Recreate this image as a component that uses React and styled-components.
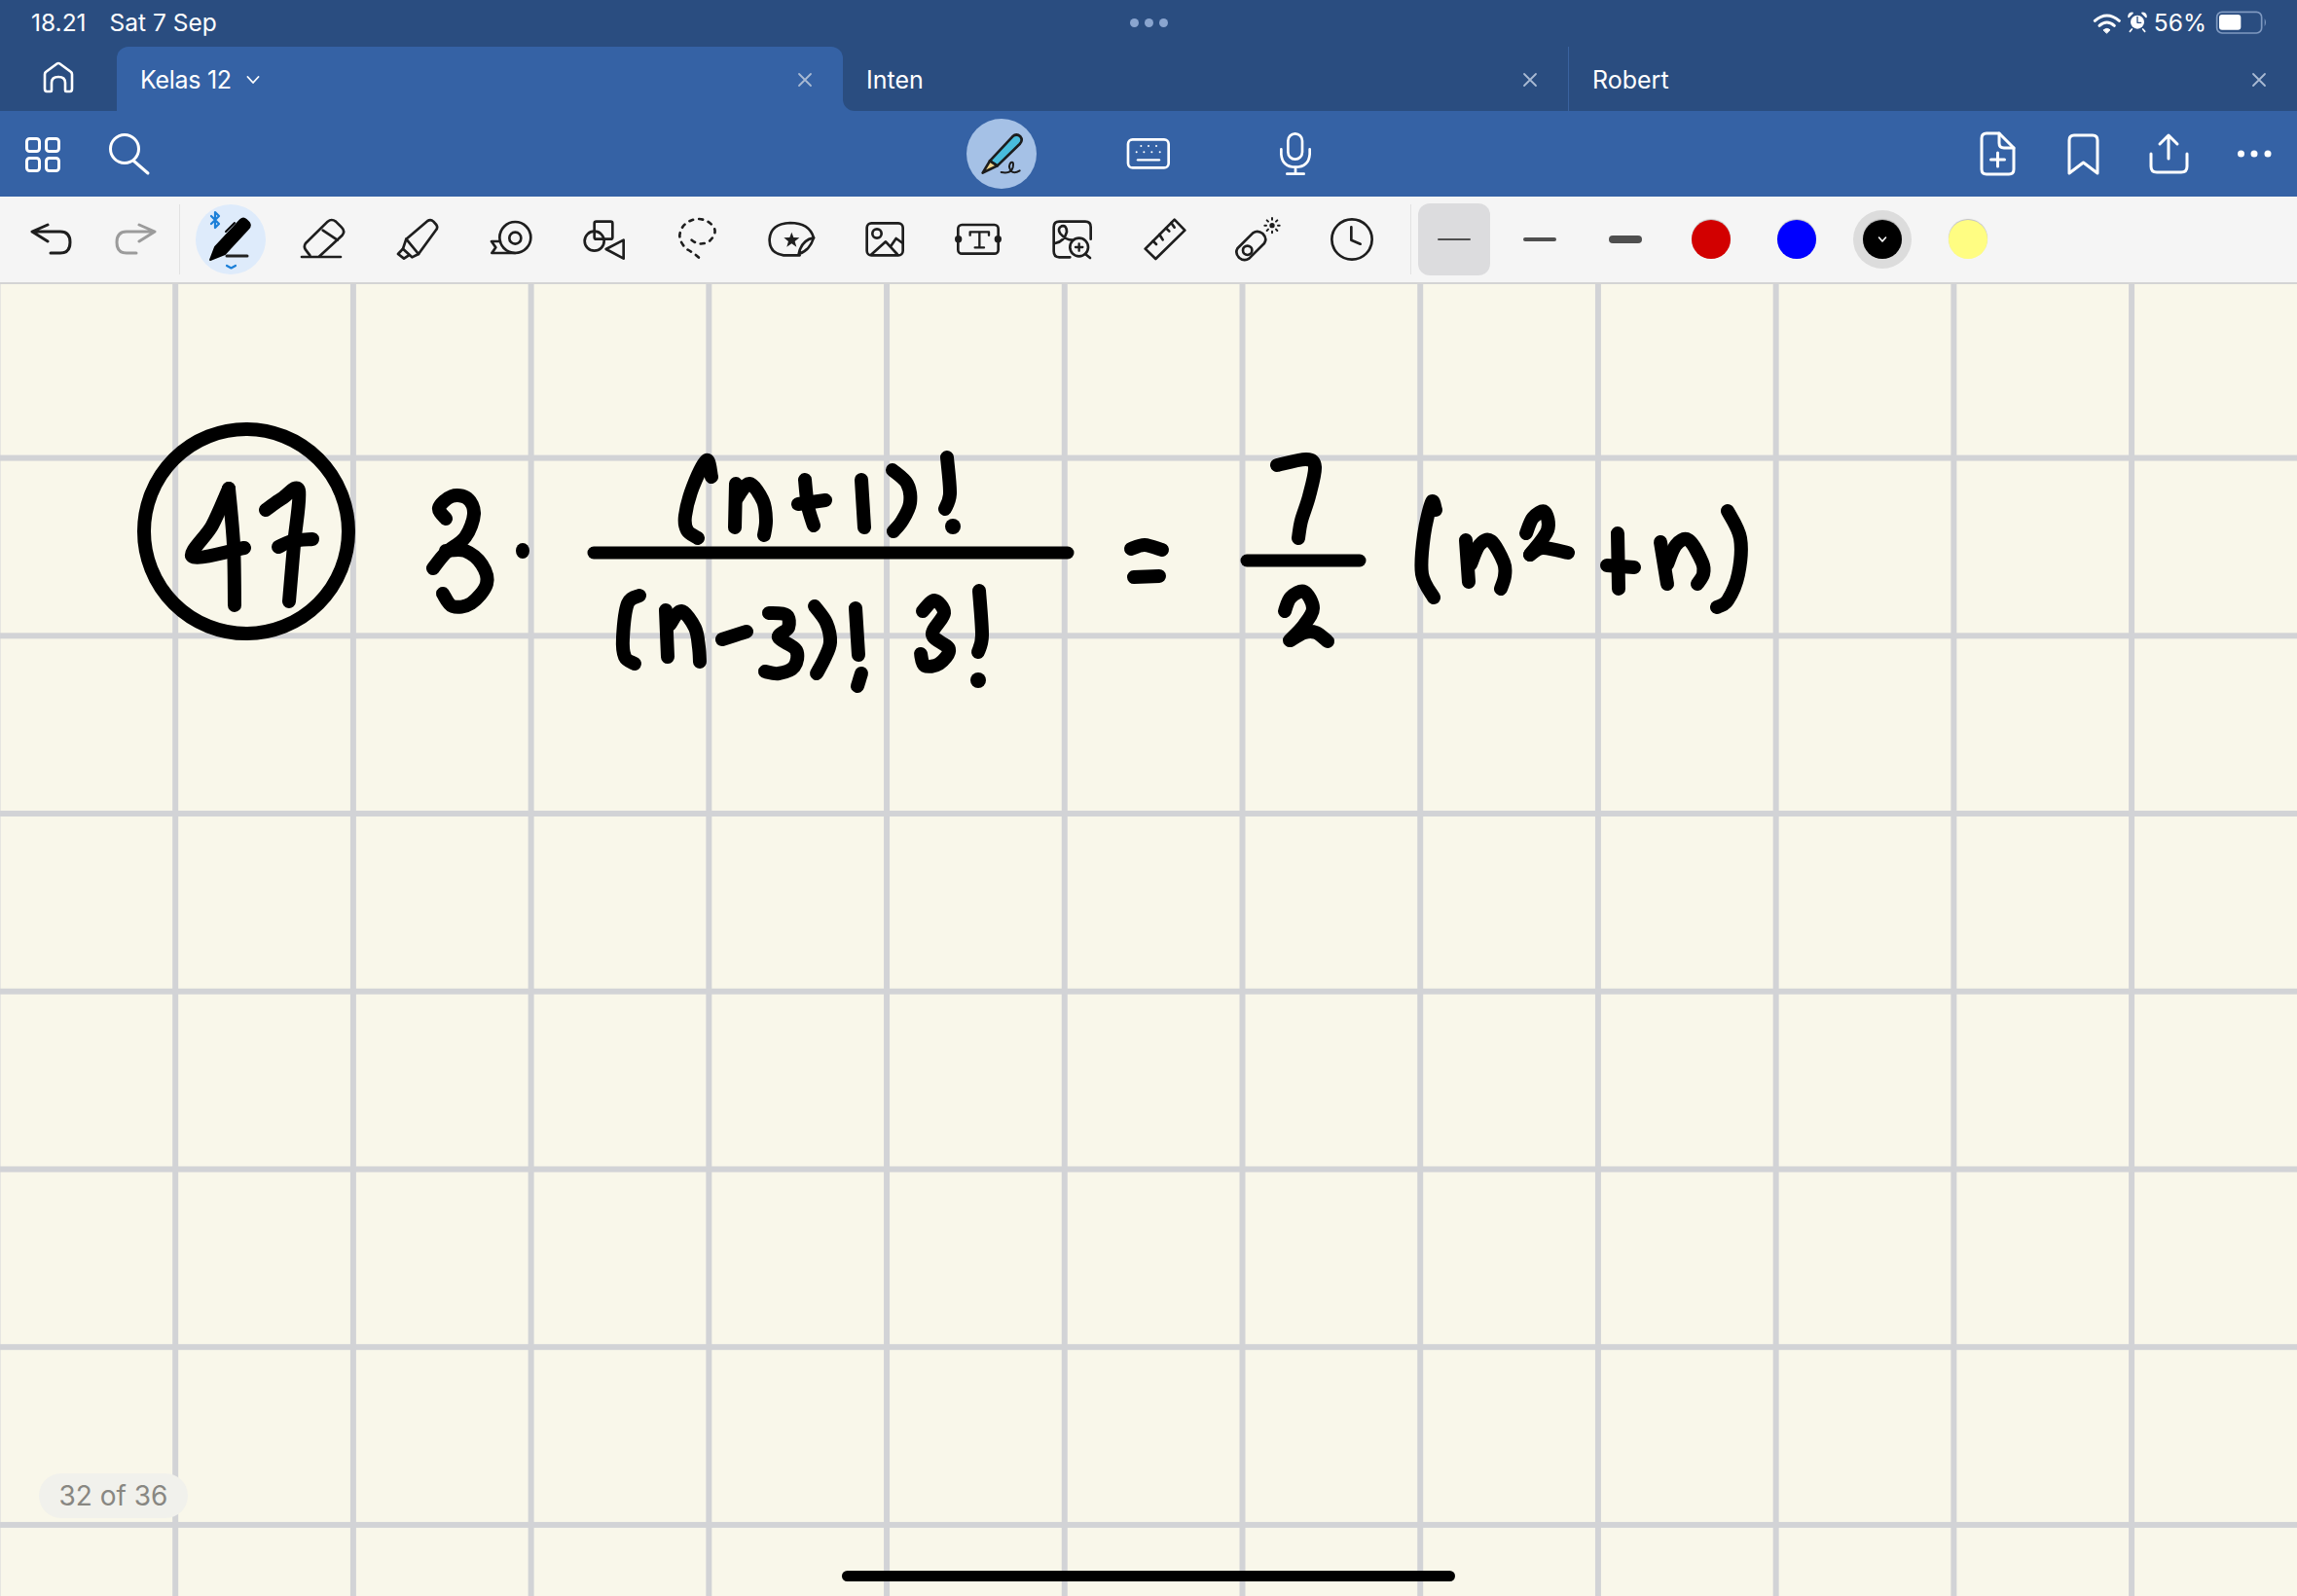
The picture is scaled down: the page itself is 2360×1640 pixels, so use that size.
import React from "react";
import styled, { createGlobalStyle } from "styled-components";

const Global = createGlobalStyle`
  html, body { margin: 0; padding: 0; background: #f9f7ea; overflow: hidden; }
  * { box-sizing: border-box; }
`;

const Page = styled.div`
  width: 2360px;
  height: 1640px;
  display: flex;
  flex-direction: column;
  font-family: Inter, "Liberation Sans", sans-serif;
  overflow: hidden;
`;

/* ---------- status bar ---------- */
const StatusBar = styled.div`
  height: 48px;
  background: #2a4d80;
  color: #fff;
  display: grid;
  grid-template-columns: 1fr auto 1fr;
  align-items: center;
  padding: 0 30px 2px;
  font-size: 24.5px;
`;
const StatusLeft = styled.div`
  display: flex;
  gap: 24px;
  margin-left: 2px;
`;
const StatusDots = styled.div`
  display: flex;
  gap: 6px;
`;
const StatusDot = styled.span`
  width: 9px;
  height: 9px;
  border-radius: 50%;
  background: #8aa5cf;
`;
const StatusRight = styled.div`
  display: flex;
  align-items: center;
  justify-content: flex-end;
`;
const Percent = styled.span`
  margin: 0 9px 0 6px;
`;

/* ---------- tabs ---------- */
const TabBar = styled.div`
  height: 66px;
  background: #2a4d80;
  display: flex;
`;
const HomeSlot = styled.div`
  width: 120px;
  display: flex;
  align-items: center;
  justify-content: center;
`;
const Tab = styled.div`
  flex: ${(p) => (p.$last ? "1" : `0 0 ${p.$w}px`)};
  position: relative;
  display: flex;
  align-items: center;
  justify-content: space-between;
  padding: 2px 31px 0 24px;
  color: #fff;
  font-size: 25px;
  background: ${(p) => (p.$active ? "#3562a5" : "#2a4d80")};
  border-radius: ${(p) => (p.$active ? "12px 12px 0 0" : p.$first ? "0 0 0 12px" : "0")};
  border-left: ${(p) => (p.$last ? "1px solid #3a639f" : "none")};
  z-index: ${(p) => (p.$active ? 0 : 1)};
  &::after {
    content: ${(p) => (p.$active ? '""' : "none")};
    position: absolute;
    left: 100%;
    bottom: 0;
    width: 14px;
    height: 14px;
    background: #3562a5;
  }
`;
const TabLabel = styled.span`
  display: flex;
  align-items: center;
  gap: 15px;
  letter-spacing: -0.3px;
`;

/* ---------- blue toolbar ---------- */
const MainBar = styled.div`
  height: 88px;
  background: #3562a5;
  display: grid;
  grid-template-columns: 1fr auto 1fr;
  align-items: center;
`;
const MainGroup = styled.div`
  display: flex;
  justify-content: ${(p) => (p.$end ? "flex-end" : "flex-start")};
`;
const MainSlot = styled.div`
  width: ${(p) => p.$w || 88}px;
  height: 88px;
  display: flex;
  align-items: center;
  justify-content: center;
`;
const PenDisc = styled.div`
  width: 72px;
  height: 72px;
  border-radius: 50%;
  background: #a5c1e6;
  display: flex;
`;

/* ---------- drawing tools ---------- */
const ToolRow = styled.div`
  height: 90px;
  background: #f5f5f5;
  border-bottom: 2px solid #d4d4d4;
  display: flex;
  align-items: center;
  padding-left: 8px;
`;
const HistorySlot = styled.div`
  width: 88px;
  display: flex;
  justify-content: center;
`;
const Divider = styled.div`
  width: 1px;
  height: 72px;
  background: #e2e2e2;
  margin: 0 ${(p) => p.$after}px 0 ${(p) => p.$before}px;
`;
const ToolSlot = styled.div`
  width: 96px;
  height: 72px;
  display: flex;
  align-items: center;
  justify-content: center;
`;
const PenDiscLight = styled.div`
  width: 72px;
  height: 72px;
  border-radius: 50%;
  background: #deebfb;
  display: flex;
`;
const OptionSlot = styled.div`
  width: 88px;
  height: 74px;
  display: flex;
  align-items: center;
  justify-content: center;
`;
const WidthChip = styled.div`
  width: 74px;
  height: 74px;
  border-radius: 12px;
  background: ${(p) => (p.$selected ? "#dcdcde" : "transparent")};
  display: flex;
  align-items: center;
  justify-content: center;
`;
const WidthLine = styled.span`
  width: 34px;
  height: ${(p) => p.$h}px;
  border-radius: ${(p) => p.$h / 2}px;
  background: #4f4f4f;
`;
const SwatchHalo = styled.div`
  width: 60px;
  height: 60px;
  border-radius: 50%;
  background: ${(p) => (p.$selected ? "#dcdcdc" : "transparent")};
  display: flex;
  align-items: center;
  justify-content: center;
`;
const Swatch = styled.div`
  width: 40px;
  height: 40px;
  border-radius: 50%;
  background: ${(p) => p.$color};
  box-shadow: 0 -1px 1px rgba(0, 0, 0, 0.22);
  display: flex;
  align-items: center;
  justify-content: center;
`;

/* ---------- canvas ---------- */
const Canvas = styled.div`
  flex: 1;
  position: relative;
  background-color: #f9f7ea;
  background-image:
    linear-gradient(to right, #d2d3d6 5.5px, transparent 5.5px),
    linear-gradient(to bottom, #d2d3d6 5.5px, transparent 5.5px);
  background-size: 182.73px 182.72px;
  background-position: 177.2px 175.6px;
`;
const Ink = styled.svg`
  position: absolute;
  inset: 0;
  display: block;
`;
const PageBadge = styled.div`
  position: absolute;
  left: 40px;
  bottom: 80px;
  height: 46px;
  width: 153px;
  border-radius: 23px;
  background: #f1f1ec;
  color: #888782;
  font-size: 28px;
  display: flex;
  align-items: center;
  justify-content: center;
`;
const HomeIndicator = styled.div`
  position: absolute;
  left: 865px;
  bottom: 15px;
  width: 630px;
  height: 11px;
  border-radius: 6px;
  background: #000;
`;

/* ---------- icon wrapper ---------- */
const Glyph = styled.svg`
  display: block;
  flex: none;
  fill: none;
  stroke: ${(p) => p.$stroke || "#1e1e1e"};
  stroke-width: ${(p) => p.$sw || 8};
  stroke-linecap: round;
  stroke-linejoin: round;
`;

/* Tool icon drawn in 3x units round a centre */
const T = ({ cx, cy = 123, children, sw, stroke, box = 60 }) => (
  <Glyph
    width={box}
    height={box}
    viewBox={`${cx - (box * 3) / 2} ${cy - (box * 3) / 2} ${box * 3} ${box * 3}`}
    $sw={sw}
    $stroke={stroke}
  >
    {children}
  </Glyph>
);
/* Icon in plain 60x60 units */
const W = ({ children, sw = 3, size = 60, stroke = "#fff" }) => (
  <Glyph width={size} height={size} viewBox={`0 0 ${size} ${size}`} $sw={sw} $stroke={stroke}>
    {children}
  </Glyph>
);

const UndoPath = "M27 15L11 22L27 32M11 22H40Q50 22 50 33Q50 44 40 44H30";

const Wifi = () => (
  <Glyph width={36} height={26} viewBox="50 12 104 78" $stroke="#fff" $sw={9}>
    <path d="M58 46Q95 14 133 46" />
    <path d="M72 61Q95 41 118 61" />
    <path d="M85 74Q95 66 105 74L95 84Z" fill="#fff" stroke="#fff" strokeWidth="3" />
  </Glyph>
);
const Alarm = () => (
  <Glyph width={22} height={26} viewBox="164 18 66 78" $stroke="#fff" $sw={5}>
    <circle cx="197" cy="56" r="21" fill="#fff" stroke="none" />
    <path d="M197 40V58H208" stroke="#2a4d80" strokeWidth="4" />
    <path d="M170 40Q170 28 182 28Z" fill="#fff" />
    <path d="M224 40Q224 28 212 28Z" fill="#fff" />
    <path d="M180 78L174 85M214 78L220 85" />
  </Glyph>
);
const Battery = () => (
  <Glyph width={54} height={26} viewBox="440 18 162 78" $stroke="#7f99c0" $sw={5}>
    <rect x="445" y="25" width="138" height="65" rx="16" />
    <rect x="452" y="33" width="67" height="47" rx="9" fill="#fff" stroke="none" />
    <path d="M592 45Q600 57 592 70Z" fill="#7f99c0" stroke="none" />
  </Glyph>
);

const CloseX = () => (
  <Glyph width={16} height={16} viewBox="0 0 16 16" $stroke="#a9bad3" $sw={1.8}>
    <path d="M2 2L14 14M14 2L2 14" />
  </Glyph>
);

/* ---------- handwriting ---------- */
const smooth = (p) => {
  let d = `M${p[0][0]} ${p[0][1]}`;
  for (let i = 0; i < p.length - 1; i++) {
    const a = p[i - 1] || p[i];
    const b = p[i];
    const c = p[i + 1];
    const e = p[i + 2] || c;
    d += `C${b[0] + (c[0] - a[0]) / 6} ${b[1] + (c[1] - a[1]) / 6} ${c[0] - (e[0] - b[0]) / 6} ${c[1] - (e[1] - b[1]) / 6} ${c[0]} ${c[1]}`;
  }
  return d;
};

const strokes = [
  // 47
  [[235, 502], [218, 540], [198, 572], [251, 563]],
  [[235, 502], [240, 560], [241, 622]],
  [[273, 524], [290, 512], [307, 504], [302, 560], [297, 618]],
  [[286, 562], [300, 556], [321, 554]],
  // 3
  [[458, 533], [451, 522], [464, 510], [480, 512], [487, 528], [478, 552], [458, 568], [445, 584]],
  [[458, 566], [478, 566], [495, 580], [500, 600], [484, 620], [465, 623], [455, 610]],
  // numerator
  [[731, 490], [726, 473], [712, 500], [704, 530], [706, 545], [717, 553]],
  [[755, 542], [756, 497]],
  [[757, 512], [770, 497], [784, 515], [787, 535], [785, 550]],
  [[827, 493], [830, 520], [836, 540]],
  [[820, 518], [848, 514]],
  [[885, 493], [888, 542]],
  [[917, 483], [932, 497], [935, 517], [927, 535], [918, 546]],
  [[973, 470], [976, 507], [971, 523]],
  // denominator
  [[657, 612], [645, 620], [640, 655], [642, 675], [652, 682]],
  [[684, 627], [686, 675]],
  [[688, 642], [700, 628], [714, 645], [718, 665], [719, 680]],
  [[742, 657], [767, 649]],
  [[790, 630], [808, 632], [810, 645], [800, 655], [818, 668], [816, 685], [800, 692], [786, 690]],
  [[837, 623], [849, 640], [853, 660], [847, 677], [839, 692]],
  [[879, 625], [882, 673]],
  [[885, 692], [881, 705]],
  [[948, 628], [960, 617], [970, 630], [958, 652], [975, 667], [965, 682], [950, 684], [946, 672]],
  [[1006, 607], [1009, 653], [1005, 670]],
  // =
  [[1162, 564], [1176, 560], [1194, 565]],
  [[1165, 593], [1191, 592]],
  // 7 over 2
  [[1312, 478], [1342, 472], [1351, 480], [1345, 510], [1337, 535], [1334, 553]],
  [[1320, 628], [1326, 614], [1340, 608], [1349, 625], [1340, 642], [1325, 658]],
  [[1326, 658], [1340, 650], [1352, 650], [1364, 659]],
  // ( n^2 + n )
  [[1475, 524], [1471, 516], [1463, 550], [1461, 590], [1473, 614]],
  [[1506, 555], [1509, 598]],
  [[1511, 580], [1520, 560], [1532, 556], [1545, 578], [1546, 592], [1542, 605]],
  [[1568, 548], [1575, 532], [1587, 526], [1590, 545], [1572, 570]],
  [[1572, 570], [1585, 563], [1611, 568]],
  [[1662, 548], [1663, 605]],
  [[1651, 581], [1679, 583]],
  [[1706, 557], [1713, 600]],
  [[1713, 580], [1722, 560], [1735, 555], [1749, 578], [1750, 590], [1744, 600]],
  [[1775, 525], [1788, 553], [1786, 590], [1775, 617], [1764, 624]],
];
const dots = [
  [537, 566, 7, 8],
  [979, 541, 8, 8],
  [1005, 699, 8, 8],
];
const bars = [
  [610, 568, 1097],
  [1281, 576, 1397],
];

const Handwriting = () => (
  <Ink width={2360} height={1348} viewBox="0 292 2360 1348">
    <g fill="none" stroke="#000" strokeWidth="14" strokeLinecap="round" strokeLinejoin="round">
      <ellipse cx="253" cy="546" rx="105" ry="105" strokeWidth="14" />
      {strokes.map((s, i) => (
        <path key={i} d={smooth(s)} />
      ))}
      {bars.map(([a, y, b], i) => (
        <path key={i} d={`M${a} ${y}H${b}`} strokeWidth="13" />
      ))}
    </g>
    {dots.map(([x, y, rx, ry], i) => (
      <ellipse key={i} cx={x} cy={y} rx={rx} ry={ry} fill="#000" />
    ))}
  </Ink>
);

export default function App() {
  return (
    <Page>
      <Global />
      <StatusBar>
        <StatusLeft>
          <span>18.21</span>
          <span>Sat 7 Sep</span>
        </StatusLeft>
        <StatusDots>
          <StatusDot />
          <StatusDot />
          <StatusDot />
        </StatusDots>
        <StatusRight>
          <Wifi />
          <Alarm />
          <Percent>56%</Percent>
          <Battery />
        </StatusRight>
      </StatusBar>

      <TabBar>
        <HomeSlot>
          <W size={40} sw={2.6}>
            <path d="M8 33Q6 33 6 30V15.5Q6 14 7 13L18.5 4.5Q20 3.5 21.5 4.5L33 13Q34 14 34 15.5V30Q34 33 32 33H28Q27 33 27 32V24Q27 18 20 18Q13 18 13 24V32Q13 33 12 33Z" />
          </W>
        </HomeSlot>
        <Tab $active $w={746}>
          <TabLabel>
            Kelas 12
            <Glyph width={14} height={10} viewBox="0 0 14 10" $stroke="#fff" $sw={1.8}>
              <path d="M1.5 2L7 8L12.5 2" />
            </Glyph>
          </TabLabel>
          <CloseX />
        </Tab>
        <Tab $first $w={745}>
          <span>Inten</span>
          <CloseX />
        </Tab>
        <Tab $last>
          <span>Robert</span>
          <CloseX />
        </Tab>
      </TabBar>

      <MainBar>
        <MainGroup>
          <MainSlot>
            <W>
              <rect x="13.5" y="14.5" width="13" height="13" rx="3" />
              <rect x="33.5" y="14.5" width="13" height="13" rx="3" />
              <rect x="13.5" y="34.5" width="13" height="13" rx="3" />
              <rect x="33.5" y="34.5" width="13" height="13" rx="3" />
            </W>
          </MainSlot>
          <MainSlot>
            <W>
              <circle cx="26" cy="25" r="14.5" />
              <path d="M35 37L50 50" />
            </W>
          </MainSlot>
        </MainGroup>
        <MainGroup>
          <MainSlot $w={151}>
            <PenDisc>
              <Glyph width={72} height={72} viewBox="8 5 216 216" $stroke="#1c1c1c" $sw={8}>
                <path d="M80 135L150 60Q162 49 174 60Q183 71 172 83L103 150Z" fill="#48bcdc" />
                <path d="M80 135L58 172L103 150Z" fill="#efd48a" />
                <path d="M115 170Q145 176 151 155Q155 135 145 140Q135 150 145 166Q155 176 172 165" strokeWidth="6" />
              </Glyph>
            </PenDisc>
          </MainSlot>
          <MainSlot $w={151}>
            <T cx={570} cy={114} stroke="#fff" sw={8}>
              <rect x="507" y="70" width="125" height="87" rx="14" />
              <path d="M537 133H603" strokeWidth="7" />
              <g stroke="#fff" strokeWidth="6">
                <path d="M547 90h.1M570 90h.1M594 90h.1M533 109h.1M556 109h.1M580 109h.1M605 109h.1" />
              </g>
            </T>
          </MainSlot>
          <MainSlot $w={151}>
            <T cx={1026} cy={114} stroke="#fff" sw={8}>
              <rect x="1003" y="52" width="44" height="79" rx="22" />
              <path d="M982 100V115Q985 155 1026 155Q1067 155 1070 115V100M1026 155V176M1000 176H1052" />
            </T>
          </MainSlot>
        </MainGroup>
        <MainGroup $end>
          <MainSlot>
            <W>
              <path d="M32 9H19Q14 9 14 14V46Q14 51 19 51H42Q47 51 47 46V24Z" />
              <path d="M32 9V19Q32 24 37 24H47" />
              <path d="M30.5 29V43M23.5 36H37.5" />
            </W>
          </MainSlot>
          <MainSlot>
            <W>
              <path d="M16 50V16Q16 11 21 11H40Q45 11 45 16V50L30.5 39Z" />
            </W>
          </MainSlot>
          <MainSlot>
            <W>
              <path d="M30 35V11M21 20L30 11L39 20" />
              <path d="M12 30V43Q12 49 18 49H43Q49 49 49 43V30" />
            </W>
          </MainSlot>
          <MainSlot>
            <W>
              <circle cx="16.5" cy="30" r="3.5" fill="#fff" stroke="none" />
              <circle cx="30" cy="30" r="3.5" fill="#fff" stroke="none" />
              <circle cx="44" cy="30" r="3.5" fill="#fff" stroke="none" />
            </W>
          </MainSlot>
        </MainGroup>
      </MainBar>

      <ToolRow>
        <HistorySlot>
          <W stroke="#1e1e1e">
            <path d={UndoPath} />
          </W>
        </HistorySlot>
        <HistorySlot>
          <W stroke="#9b9b9b">
            <g transform="translate(60 0) scale(-1 1)">
              <path d={UndoPath} />
            </g>
          </W>
        </HistorySlot>
        <Divider $before={0} $after={4} />
        <ToolSlot>
          <PenDiscLight>
            <Glyph width={72} height={72} viewBox="0 0 72 72" $stroke="#000" $sw={2}>
              <path d="M15 57L20 44L46 16Q49 13 52 16L55 19Q57 22 54 25L30 51Z" fill="#000" />
              <path d="M31 28L40 19" stroke="#000" />
              <path d="M32 53H53" strokeWidth="3" stroke="#222" />
              <path d="M16 12L24 20L20 24V8L24 12L16 20" stroke="#1b7fd8" strokeWidth="2.2" />
              <path d="M32 63L36.5 65.5L41 63" stroke="#1b7fd8" strokeWidth="2.2" />
            </Glyph>
          </PenDiscLight>
        </ToolSlot>
        <ToolSlot>
          <T cx={429}>
            <path d="M385 172L372 155Q365 145 372 135L440 68Q452 58 465 68L483 86Q495 98 485 110L415 175" />
            <path d="M425 95L470 125" />
            <path d="M360 177H480" />
          </T>
        </ToolSlot>
        <ToolSlot>
          <T cx={717}>
            <path d="M748 66Q758 60 766 68L775 78Q781 87 773 95L720 168L682 122Z" />
            <path d="M682 122L672 152L700 178L720 168" />
            <path d="M672 152L657 168L675 182L690 172" />
          </T>
        </ToolSlot>
        <ToolSlot>
          <T cx={1005}>
            <circle cx="1018" cy="117" r="48" />
            <circle cx="1018" cy="119" r="18" />
            <path d="M1018 165H946L958 148L945 129H972" />
          </T>
        </ToolSlot>
        <ToolSlot>
          <T cx={1293}>
            <rect x="1262" y="68" width="56" height="54" rx="6" />
            <circle cx="1262" cy="128" r="30" />
            <path d="M1352 125V182L1298 153Z" />
          </T>
        </ToolSlot>
        <ToolSlot>
          <T cx={111}>
            <path d="M92 125Q115 145 145 130Q172 105 160 85Q140 58 105 60Q60 70 55 110Q55 135 80 155Q100 165 120 185" strokeDasharray="12 18" />
          </T>
        </ToolSlot>
        <ToolSlot>
          <T cx={399}>
            <path d="M425 172H375Q330 165 332 122Q335 75 395 72Q455 72 468 118" />
            <path d="M468 118Q430 125 422 168Q455 158 468 118Z" />
            <polygon points="400,101 406,117 424,118 410,129 415,146 400,136 385,146 390,129 376,118 394,117" fill="#1e1e1e" stroke="none" />
          </T>
        </ToolSlot>
        <ToolSlot>
          <T cx={687}>
            <rect x="632" y="73" width="111" height="99" rx="14" />
            <circle cx="663" cy="105" r="14" />
            <path d="M645 170L690 130L725 168M705 145L722 120L743 135" />
          </T>
        </ToolSlot>
        <ToolSlot>
          <T cx={975}>
            <rect x="913" y="78" width="124" height="89" rx="12" />
            <circle cx="914" cy="122" r="7" fill="#1e1e1e" />
            <circle cx="1036" cy="122" r="7" fill="#1e1e1e" />
            <path d="M950 110V100H1008V110M979 100V148M965 148H993" strokeWidth="7" />
          </T>
        </ToolSlot>
        <ToolSlot>
          <T cx={1263}>
            <path d="M1258 178H1225Q1208 178 1208 160V85Q1208 68 1225 68H1305Q1322 68 1322 85V122" />
            <path d="M1212 135Q1240 130 1248 100Q1248 78 1232 82Q1218 90 1228 105Q1245 125 1265 125" />
            <circle cx="1286" cy="147" r="28" />
            <path d="M1305 168L1320 180" />
            <path d="M1286 136V158M1275 147H1297" strokeWidth="7" />
          </T>
        </ToolSlot>
        <ToolSlot>
          <T cx={81}>
            <path d="M110 62L142 95L52 183L20 152Z" />
            <path d="M44 128L54 138M64 108L74 124M84 88L94 98M100 72L110 86" />
          </T>
        </ToolSlot>
        <ToolSlot>
          <T cx={369}>
            <path d="M305 150L352 103Q367 93 382 105Q397 120 387 135L340 182Q325 192 310 180Q295 165 305 150Z" />
            <circle cx="335" cy="157" r="14" />
            <circle cx="411" cy="80" r="8" fill="#1e1e1e" stroke="none" />
            <path d="M411 57V62M411 98V103M388 80H393M429 80H434M395 64L399 68M423 92L427 96M395 96L399 92M423 68L427 64" strokeWidth="6" />
          </T>
        </ToolSlot>
        <ToolSlot>
          <T cx={657}>
            <circle cx="657" cy="123" r="62" />
            <path d="M655 85V125L683 137" />
          </T>
        </ToolSlot>
        <Divider $before={12} $after={0} />
        <OptionSlot>
          <WidthChip $selected>
            <WidthLine $h={2} />
          </WidthChip>
        </OptionSlot>
        <OptionSlot>
          <WidthChip>
            <WidthLine $h={4} />
          </WidthChip>
        </OptionSlot>
        <OptionSlot>
          <WidthChip>
            <WidthLine $h={8} />
          </WidthChip>
        </OptionSlot>
        <OptionSlot>
          <Swatch $color="#d20000" />
        </OptionSlot>
        <OptionSlot>
          <Swatch $color="#0000ff" />
        </OptionSlot>
        <OptionSlot>
          <SwatchHalo $selected>
            <Swatch $color="#000">
              <Glyph width={10} height={8} viewBox="0 0 10 8" $stroke="#fff" $sw={1.6}>
                <path d="M1.5 2L5 6L8.5 2" />
              </Glyph>
            </Swatch>
          </SwatchHalo>
        </OptionSlot>
        <OptionSlot>
          <Swatch $color="#fffd82" />
        </OptionSlot>
      </ToolRow>

      <Canvas>
        <Handwriting />
        <PageBadge>32 of 36</PageBadge>
        <HomeIndicator />
      </Canvas>
    </Page>
  );
}
